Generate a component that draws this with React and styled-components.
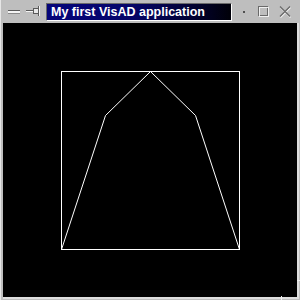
import React from "react";
import styled, { createGlobalStyle } from "styled-components";

const Global = createGlobalStyle`
  html, body { margin: 0; padding: 0; background: #bebebe; }
`;

const Window = styled.div`
  position: relative;
  width: 300px;
  height: 300px;
  box-sizing: border-box;
  background: #bebebe;
  display: flex;
  flex-direction: column;
  padding: 0 1px 1px 2px;
  border-left: 1px solid #e6e6e6;
  font-family: "Liberation Sans", Arial, sans-serif;
`;

const TitleBar = styled.div`
  height: 23px;
  display: flex;
  align-items: center;
  padding-left: 5px;
  box-sizing: border-box;
  flex: none;
`;

const IconSlot = styled.div`
  display: flex;
  align-items: center;
  justify-content: center;
  width: ${(p) => p.$w}px;
  height: 18px;
  margin-left: ${(p) => p.$ml || 0}px;
  flex: none;
`;

const TitleBox = styled.div`
  width: 186px;
  height: 18px;
  margin-left: 6px;
  box-sizing: border-box;
  border-top: 1px solid #6a6a6a;
  border-left: 1px solid #6a6a6a;
  border-right: 1px solid #ffffff;
  border-bottom: 1px solid #ffffff;
  background: linear-gradient(to right, #06067a 0%, #05056a 45%, #020230 80%, #000008 100%);
  color: #ffffff;
  font-weight: bold;
  font-size: 12.5px;
  line-height: 16px;
  padding-left: 4px;
  white-space: nowrap;
  overflow: hidden;
  flex: none;
`;

const Canvas = styled.div`
  flex: 1;
  background: #000000;
  border-right: 2px solid #dedede;
  border-bottom: 2px solid #dedede;
  display: flex;
  min-height: 0;
`;

const Plot = styled.svg`
  display: block;
  width: 100%;
  height: 100%;
`;

const Notch = styled.div`
  position: absolute;
  background: #f0f0f0;
  ${(p) =>
    p.$v
      ? `left: 280px; bottom: 0; width: 1px; height: 4px;`
      : `right: 0; top: 280px; width: 3px; height: 1px;`}
`;

const Minimize = () => (
  <svg width="12" height="4" viewBox="0 0 12 4">
    <rect x="0" y="0" width="12" height="1" fill="#5a5a5a" />
    <rect x="0" y="1" width="12" height="2" fill="#f4f4f4" />
    <rect x="0" y="3" width="12" height="1" fill="#8a8a8a" />
  </svg>
);

const Pin = () => (
  <svg width="14" height="11" viewBox="0 0 14 11">
    <rect x="0" y="4" width="7" height="1" fill="#5a5a5a" />
    <rect x="0" y="5" width="7" height="1" fill="#f4f4f4" />
    <rect x="7" y="2" width="1" height="6" fill="#5a5a5a" />
    <rect x="8" y="3" width="4" height="4" fill="#e8e8e8" />
    <rect x="8" y="2" width="4" height="1" fill="#5a5a5a" />
    <rect x="8" y="7" width="4" height="1" fill="#5a5a5a" />
    <rect x="12" y="0" width="1" height="10" fill="#5a5a5a" />
    <rect x="13" y="0" width="1" height="10" fill="#f4f4f4" />
  </svg>
);

const Dot = () => (
  <svg width="2" height="2" viewBox="0 0 2 2">
    <rect width="2" height="2" fill="#505050" />
  </svg>
);

const Maximize = () => (
  <svg width="11" height="11" viewBox="0 0 11 11">
    <rect x="0.5" y="0.5" width="9" height="9" fill="none" stroke="#6a6a6a" />
    <rect x="1.5" y="1.5" width="9" height="9" fill="none" stroke="#f4f4f4" strokeOpacity="0.9" />
  </svg>
);

const Close = () => (
  <svg width="13" height="13" viewBox="0 0 13 13">
    <path d="M1.5 2.5 L11.5 12.5 M11.5 2.5 L1.5 12.5" stroke="#f4f4f4" strokeWidth="1.2" />
    <path d="M1 1.5 L11 11.5 M11 1.5 L1 11.5" stroke="#6a6a6a" strokeWidth="1.3" />
  </svg>
);

export default function App() {
  return (
    <>
      <Global />
      <Window>
        <TitleBar>
          <IconSlot $w={12}>
            <Minimize />
          </IconSlot>
          <IconSlot $w={14} $ml={6}>
            <Pin />
          </IconSlot>
          <TitleBox>My first VisAD application</TitleBox>
          <IconSlot $w={2} $ml={11}>
            <Dot />
          </IconSlot>
          <IconSlot $w={11} $ml={13}>
            <Maximize />
          </IconSlot>
          <IconSlot $w={13} $ml={10}>
            <Close />
          </IconSlot>
        </TitleBar>
        <Canvas>
          <Plot viewBox="3 23 294 274" preserveAspectRatio="none">
            <rect x="61.5" y="71.5" width="178" height="178" fill="none" stroke="#ffffff" strokeWidth="1" />
            <polyline
              points="61.5,249.5 105.5,115.5 150.5,71.5 195.5,115.5 239.5,249.5"
              fill="none"
              stroke="#ffffff"
              strokeWidth="1"
            />
          </Plot>
        </Canvas>
        <Notch $v />
        <Notch />
      </Window>
    </>
  );
}
